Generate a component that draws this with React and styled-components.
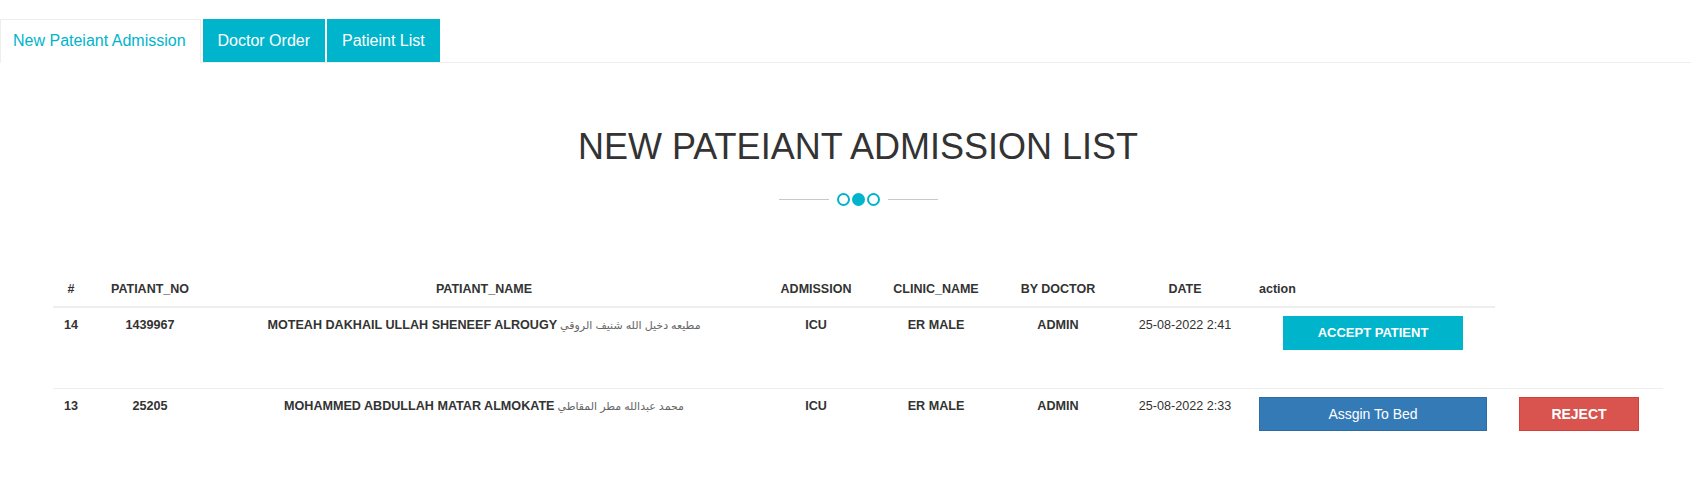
import React from 'react';
import styled, { createGlobalStyle } from 'styled-components';

const GlobalStyle = createGlobalStyle`
  body {
    margin: 0;
    background: #fff;
    color: #333;
    font-family: "Liberation Sans", Arial, "DejaVu Sans", sans-serif;
  }
`;

const TEAL = '#00b4cc';

const TabBar = styled.ul`
  display: flex;
  align-items: flex-start;
  margin: 19px 0 0;
  padding: 0;
  list-style: none;
  border-bottom: 1px solid #eee;
`;

const Tab = styled.li`
  margin: 0 2px ${p => (p.active ? '-1px' : '0')} 0;
  height: ${p => (p.active ? '44px' : '43px')};
  box-sizing: border-box;
  display: flex;
  align-items: center;
  padding: ${p => (p.active ? '0 14px 0 12px' : '0 15px')};
  font-size: 16px;
  color: ${p => (p.active ? TEAL : '#fff')};
  background: ${p => (p.active ? '#fff' : TEAL)};
  border: ${p => (p.active ? '1px solid #eee' : 'none')};
  border-bottom-color: transparent;
  cursor: pointer;
`;

const Content = styled.div`
  margin: 0 28px 0 53px;
`;

const Title = styled.h2`
  margin: 64px 0 0;
  font-size: 36px;
  font-weight: 300;
  line-height: 1.1;
  color: #333;
  text-align: center;
`;

const Divider = styled.div`
  display: flex;
  justify-content: center;
  align-items: center;
  margin-top: 26px;
`;

const Line = styled.span`
  width: 50px;
  height: 1px;
  background: #c8c8c8;
  margin: 0 7px;
`;

const Dot = styled.span`
  width: 13px;
  height: 13px;
  box-sizing: border-box;
  border-radius: 50%;
  border: 2px solid ${TEAL};
  background: ${p => (p.filled ? TEAL : '#fff')};
  margin: 0 1px;
`;

const Table = styled.table`
  width: 100%;
  margin-top: 67px;
  border-collapse: collapse;
  table-layout: fixed;
`;

const Th = styled.th`
  padding: 8px;
  font-size: 12.5px;
  font-weight: bold;
  line-height: 17px;
  text-align: ${p => p.align || 'center'};
  border-bottom: 2px solid #eee;
  color: #333;
`;

const Row = styled.tr`
  height: ${p => p.h || 'auto'};
`;

const Td = styled.td`
  padding: 9px 8px 8px;
  font-size: 12.6px;
  line-height: 17px;
  font-weight: ${p => (p.light ? 'normal' : 'bold')};
  text-align: center;
  vertical-align: top;
  border-top: 1px solid #eee;
  color: #333;
  white-space: nowrap;
`;

const Arabic = styled.span`
  font-size: 11px;
  font-weight: normal;
  color: #666;
  vertical-align: top;
  margin-left: 3px;
`;

const Button = styled.button`
  height: 34px;
  width: ${p => p.w};
  margin-top: -1px;
  padding: 0;
  border: 1px solid ${p => p.edge};
  background: ${p => p.bg};
  color: #fff;
  font-family: inherit;
  font-size: ${p => p.size || '14px'};
  font-weight: ${p => (p.bold ? 'bold' : 'normal')};
  cursor: pointer;
`;

const patients = [
  {
    id: 14, no: '1439967', name: 'MOTEAH DAKHAIL ULLAH SHENEEF ALROUGY', ar: 'مطيعه دخيل الله شنيف الروقي',
    adm: 'ICU', clinic: 'ER MALE', doctor: 'ADMIN', date: '25-08-2022 2:41', accepted: false,
  },
  {
    id: 13, no: '25205', name: 'MOHAMMED ABDULLAH MATAR ALMOKATE', ar: 'محمد عبدالله مطر المقاطي',
    adm: 'ICU', clinic: 'ER MALE', doctor: 'ADMIN', date: '25-08-2022 2:33', accepted: true,
  },
];

const App = () => (
  <>
    <GlobalStyle />
    <TabBar>
      <Tab active>New Pateiant Admission</Tab>
      <Tab>Doctor Order</Tab>
      <Tab>Patieint List</Tab>
    </TabBar>

    <Content>
      <Title>NEW PATEIANT ADMISSION LIST</Title>
      <Divider>
        <Line />
        <Dot />
        <Dot filled />
        <Dot />
        <Line />
      </Divider>

      <Table>
        <colgroup>
          <col style={{ width: 36 }} />
          <col style={{ width: 122 }} />
          <col style={{ width: 546 }} />
          <col style={{ width: 118 }} />
          <col style={{ width: 122 }} />
          <col style={{ width: 122 }} />
          <col style={{ width: 132 }} />
          <col style={{ width: 244 }} />
          <col style={{ width: 168 }} />
        </colgroup>
        <thead>
          <tr>
            <Th>#</Th>
            <Th>PATIANT_NO</Th>
            <Th>PATIANT_NAME</Th>
            <Th>ADMISSION</Th>
            <Th>CLINIC_NAME</Th>
            <Th>BY DOCTOR</Th>
            <Th>DATE</Th>
            <Th align="left">action</Th>
          </tr>
        </thead>
        <tbody>
          {patients.map(p => (
            <Row key={p.id} h={p.accepted ? 'auto' : '82px'}>
              <Td>{p.id}</Td>
              <Td>{p.no}</Td>
              <Td>{p.name}<Arabic>{p.ar}</Arabic></Td>
              <Td>{p.adm}</Td>
              <Td>{p.clinic}</Td>
              <Td>{p.doctor}</Td>
              <Td light>{p.date}</Td>
              {p.accepted ? (
                <>
                  <Td light>
                    <Button w="228px" bg="#337ab7" edge="#2e6da4">Assgin To Bed</Button>
                  </Td>
                  <Td>
                    <Button w="120px" bg="#d9534f" edge="#d43f3a" bold>REJECT</Button>
                  </Td>
                </>
              ) : (
                <Td>
                  <Button w="180px" bg={TEAL} edge={TEAL} size="13px" bold>ACCEPT PATIENT</Button>
                </Td>
              )}
            </Row>
          ))}
        </tbody>
      </Table>
    </Content>
  </>
);

export default App;
